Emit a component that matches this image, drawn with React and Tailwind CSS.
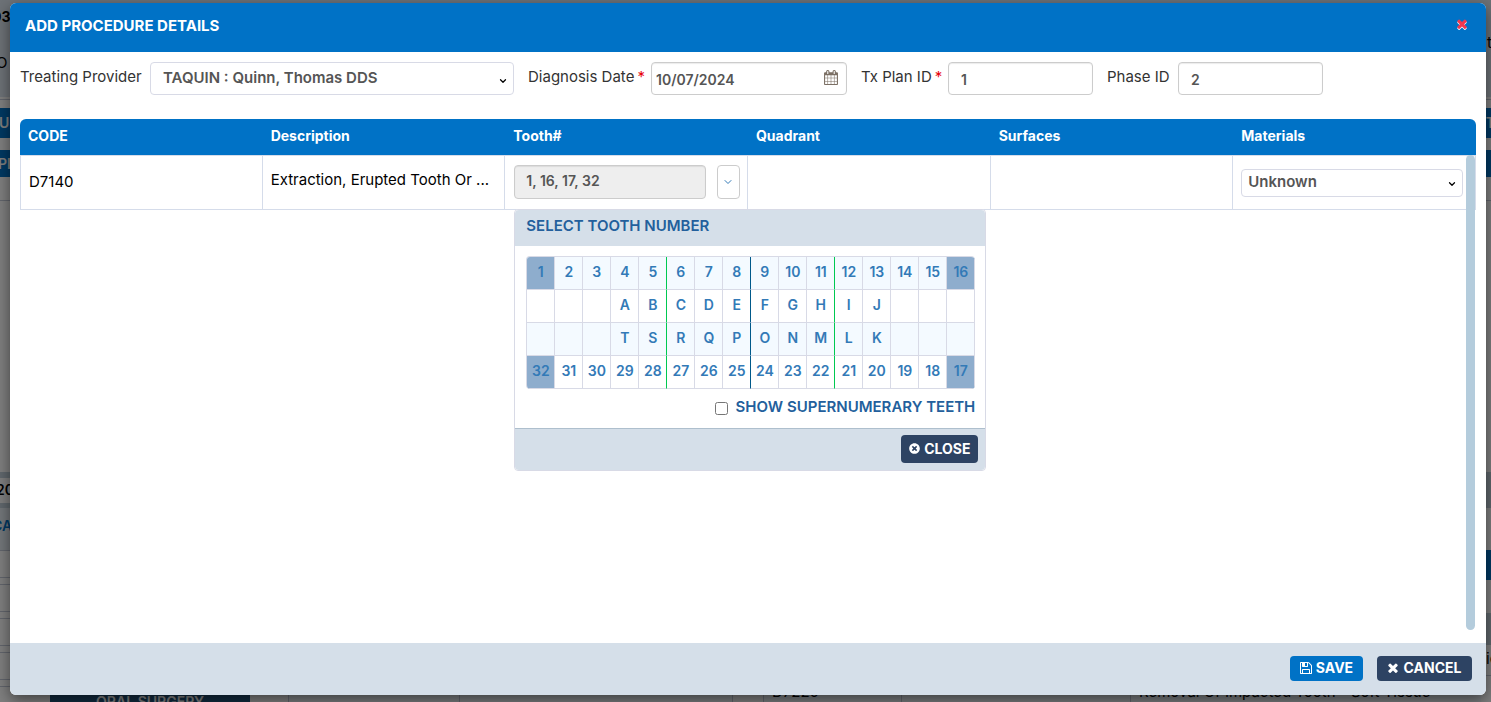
import React, { useState } from 'react';
import { FaTimesCircle } from 'react-icons/fa';
import { ChevronDown } from 'lucide-react';

const COLUMNS = ['CODE', 'Description', 'Tooth#', 'Quadrant', 'Surfaces', 'Materials'];

const TEETH = [
  ['1', '2', '3', '4', '5', '6', '7', '8', '9', '10', '11', '12', '13', '14', '15', '16'],
  ['', '', '', 'A', 'B', 'C', 'D', 'E', 'F', 'G', 'H', 'I', 'J', '', '', ''],
  ['', '', '', 'T', 'S', 'R', 'Q', 'P', 'O', 'N', 'M', 'L', 'K', '', '', ''],
  ['32', '31', '30', '29', '28', '27', '26', '25', '24', '23', '22', '21', '20', '19', '18', '17'],
];

// Sextant lines are green, the midline is blue
const DIVIDERS = {
  4: 'border-r border-b border-b-[#d8dae6] border-r-green-500',
  7: 'border-r border-b border-b-[#d8dae6] border-r-sky-800',
  10: 'border-r border-b border-b-[#d8dae6] border-r-green-500',
};

const TimesIcon = ({ className }) => (
  <svg viewBox="300 300 1192 1256" className={className} fill="currentColor" aria-hidden="true">
    <path d="M1490 1322q0 40-28 68l-136 136q-28 28-68 28t-68-28l-294-294-294 294q-28 28-68 28t-68-28l-136-136q-28-28-28-68t28-68l294-294-294-294q-28-28-28-68t28-68l136-136q28-28 68-28t68 28l294 294 294-294q28-28 68-28t68 28l136 136q28 28 28 68t-28 68l-294 294 294 294q28 28 28 68z" />
  </svg>
);

const FloppyIcon = ({ className }) => (
  <svg viewBox="128 128 1536 1536" className={className} fill="currentColor" aria-hidden="true">
    <path d="M512 1536h768v-384h-768v384zm896 0h128v-896q0-14-10-38.5t-20-34.5l-281-281q-10-10-34-20t-39-10v416q0 40-28 68t-68 28h-576q-40 0-68-28t-28-68v-416h-128v1280h128v-416q0-40 28-68t68-28h832q40 0 68 28t28 68v416zm-384-928v-320q0-13-9.5-22.5t-22.5-9.5h-192q-13 0-22.5 9.5t-9.5 22.5v320q0 13 9.5 22.5t22.5 9.5h192q13 0 22.5-9.5t9.5-22.5zm640 32v928q0 40-28 68t-68 28h-1344q-40 0-68-28t-28-68v-1344q0-40 28-68t68-28h928q40 0 88 20t76 48l280 280q28 28 48 76t20 88z" />
  </svg>
);

const CalendarIcon = ({ className }) => (
  <svg viewBox="64 0 1664 1792" className={className} fill="currentColor" aria-hidden="true">
    <path d="M192 1664h288v-288h-288v288zm352 0h320v-288h-320v288zm-352-352h288v-320h-288v320zm352 0h320v-320h-320v320zm-352-384h288v-288h-288v288zm736 736h320v-288h-320v288zm-384-736h320v-288h-320v288zm768 736h288v-288h-288v288zm-384-352h320v-320h-320v320zm-352-864v-288q0-13-9.5-22.5t-22.5-9.5h-64q-13 0-22.5 9.5t-9.5 22.5v288q0 13 9.5 22.5t22.5 9.5h64q13 0 22.5-9.5t9.5-22.5zm736 864h288v-320h-288v320zm-384-384h320v-288h-320v288zm384 0h288v-288h-288v288zm32-480v-288q0-13-9.5-22.5t-22.5-9.5h-64q-13 0-22.5 9.5t-9.5 22.5v288q0 13 9.5 22.5t22.5 9.5h64q13 0 22.5-9.5t9.5-22.5zm384-64v1280q0 52-38 90t-90 38h-1408q-52 0-90-38t-38-90v-1280q0-52 38-90t90-38h128v-96q0-66 47-113t113-47h64q66 0 113 47t47 113v96h384v-96q0-66 47-113t113-47h64q66 0 113 47t47 113v96h128q52 0 90 38t38 90z" />
  </svg>
);

const SelectBox = ({ id, label, value, className, arrowClass }) => (
  <div className="relative">
    <select
      id={id}
      aria-label={label}
      defaultValue={value}
      className={`w-full appearance-none rounded border border-[#d8dae6] bg-white font-semibold text-[#555] outline-none ${className}`}
    >
      <option>{value}</option>
    </select>
    <ChevronDown className={`pointer-events-none absolute h-2.5 w-2.5 text-black ${arrowClass}`} strokeWidth={3} />
  </div>
);

const Required = () => <span className="ml-[3px] text-red-600">*</span>;

// Chart page that stays visible around the dialog
const ChartPage = () => (
  <div className="absolute inset-0 flex flex-col overflow-hidden bg-white" aria-hidden="true">
    <div className="flex h-[97px] shrink-0 flex-col gap-7 bg-[#dbe5ee] pt-[7px]">
      <div className="-ml-2 text-sm leading-5 font-bold">03</div>
      <div className="flex justify-between text-[15px] leading-4">
        <span className="-ml-1">O</span>
        <span className="-mt-5 -mr-px">t</span>
      </div>
    </div>
    <div className="mt-0.5 h-[9px] shrink-0 border-t border-[#c5cad8]" />
    <div className="flex h-[30px] shrink-0 items-center justify-between bg-[#0072c6] text-sm font-semibold text-white">
      <span className="-ml-px">U</span>
      <span className="-mr-1">T</span>
    </div>
    <div className="mt-3 flex h-[27px] shrink-0 items-center bg-[#0072c6] text-sm font-semibold text-white">
      <span className="-ml-0.5">PL</span>
    </div>
    <div className="mt-[23px] h-[272px] shrink-0 border-t border-[#c5cad8]" />
    <div className="flex h-9 shrink-0 items-center bg-[#c3d0da]">
      <div className="flex h-[25px] w-10 items-center bg-white text-sm font-semibold">
        <span className="-ml-1">20</span>
      </div>
    </div>
    <div className="flex min-h-0 grow justify-between">
      <div className="w-8 shrink-0">
        <div className="h-[42px] bg-[#e6eef5] pt-2 text-sm font-semibold text-[#0072c6]">
          <div className="-ml-2">CA</div>
        </div>
        <div className="flex flex-col gap-1.5">
          {[0, 1, 2, 3, 4].map(i => (
            <div key={i} className="h-7 border-y border-[#c5cad8]" />
          ))}
        </div>
      </div>
      <div className="flex min-w-0 grow items-end">
        <div className="flex h-2 min-w-0 grow">
          <div className="ml-[18px] w-[200px] shrink-0 bg-[#23547c] text-center text-sm leading-4 font-semibold text-white">
            ORAL SURGERY
          </div>
          <div className="ml-[38px] h-full w-[172px] shrink-0 border-x border-[#c5cad8] bg-[#f4faff]" />
          <div className="h-full grow border-r border-[#c5cad8] bg-[#f4faff]" />
          <div className="h-full w-[31px] shrink-0 border-r border-[#c5cad8]" />
          <div className="h-full w-[138px] shrink-0 border-r border-[#c5cad8] bg-[#f4faff] pl-2 text-[15px] leading-3">
            <div className="-mt-2">D7220</div>
          </div>
          <div className="h-full w-[229px] shrink-0 border-r border-[#c5cad8] bg-[#f4faff]" />
          <div className="h-full w-[350px] shrink-0 bg-[#f4faff] pl-2 text-[15px] leading-3 whitespace-nowrap">
            <div className="-mt-2">Removal Of Impacted Tooth - Soft Tissue</div>
          </div>
        </div>
      </div>
      <div className="w-2.5 shrink-0 pt-[42px]">
        <div className="h-[30px] bg-[#0072c6]" />
        <div className="mt-[33px] h-8 bg-[#c3d0da]" />
        <div className="h-[31px] border-b border-[#c5cad8] pt-1 pl-[5px] text-[15px] leading-5">ic</div>
      </div>
    </div>
    <div className="absolute inset-0 bg-black/50" />
  </div>
);

const ToothPicker = ({ selected, onToggle, onClose }) => (
  <div className="absolute top-full left-[9px] z-10 w-[472px] rounded border border-[#d8dae6] bg-white">
    <div className="rounded-t bg-[#d5dfe9] px-[11px] pt-1.5 pb-2.5 text-[15px] leading-5 font-semibold text-[#235f9c]">
      SELECT TOOTH NUMBER
    </div>
    <div className="pt-2.5 pr-2.5 pl-[11px]">
      <div className="overflow-hidden rounded border-t border-l border-[#d8dae6]">
        <table className="w-full table-fixed border-separate border-spacing-0">
          <tbody>
            {TEETH.map((row, r) => (
              <tr key={r} className="odd:bg-[#f4faff]">
                {row.map((tooth, c) => (
                  <td
                    key={c}
                    className={`h-[33px] p-0 ${DIVIDERS[c] || 'border-r border-b border-[#d8dae6]'} ${selected.includes(tooth) ? 'bg-[#8eadcd]' : ''}`}
                  >
                    {tooth && (
                      <button
                        type="button"
                        onClick={() => onToggle(tooth)}
                        className="block h-8 w-full pb-0.5 text-center text-[14px] leading-5 font-semibold text-[#337ab7]"
                      >
                        {tooth}
                      </button>
                    )}
                  </td>
                ))}
              </tr>
            ))}
          </tbody>
        </table>
      </div>
      <div className="flex h-[39px] items-start justify-end gap-2 pt-2 text-[#235f9c]">
        <input id="supernumerary" type="checkbox" className="mt-[5px] h-[13px] w-[13px]" />
        <label htmlFor="supernumerary" className="text-[15px] leading-5 font-semibold">
          SHOW SUPERNUMERARY TEETH
        </label>
      </div>
    </div>
    <div className="flex h-[42px] justify-end rounded-b border-t border-[#aebfcd] bg-[#d5dfe9] px-[7px] pt-1.5">
      <button
        type="button"
        onClick={onClose}
        className="flex h-7 w-[77px] items-center justify-center gap-1 rounded bg-[#2d4363] pb-0.5 text-[14px] font-bold text-white"
      >
        <FaTimesCircle className="h-[11px] w-[11px]" />
        CLOSE
      </button>
    </div>
  </div>
);

const App = () => {
  const [selected, setSelected] = useState(['1', '16', '17', '32']);
  const [pickerOpen, setPickerOpen] = useState(true);

  const toggleTooth = tooth => {
    setSelected(prev =>
      prev.includes(tooth) ? prev.filter(t => t !== tooth) : [...prev, tooth].sort((a, b) => Number(a) - Number(b))
    );
  };

  const inputClass =
    'h-[33px] rounded border border-[#ccc] bg-white pt-0.5 text-[14px] font-semibold text-[#555] shadow-[inset_0_1px_1px_rgba(0,0,0,0.08)] outline-none';
  const labelClass = 'shrink-0 pt-[5px] text-[15px] leading-5 whitespace-nowrap text-[#333]';

  return (
    <div className="relative h-screen overflow-hidden font-['Inter','Liberation_Sans',sans-serif]">
      <ChartPage />

      <div className="relative flex h-full flex-col pt-[3px] pr-[5px] pb-[7px] pl-2.5">
        <div role="dialog" aria-labelledby="dialog-title" className="flex grow flex-col rounded-md bg-white shadow-[0_5px_15px_rgba(0,0,0,0.5)]">
          {/* Header */}
          <div className="flex h-[49px] items-start justify-between rounded-t-md bg-[#0072c6] px-[15px] pt-[13px] text-white">
            <h1 id="dialog-title" className="text-[15px] leading-5 font-bold">ADD PROCEDURE DETAILS</h1>
            <button type="button" aria-label="Close" className="mt-[3px] mr-1 text-[#f0384f]">
              <TimesIcon className="h-2.5 w-2.5 drop-shadow-[0_1px_0_#fff]" />
            </button>
          </div>

          {/* Body */}
          <div className="flex grow flex-col px-2.5 pt-2.5 pb-[13px]">
            <div className="flex gap-3.5">
              <div className="flex">
                <label htmlFor="provider" className={`w-[130px] ${labelClass}`}>Treating Provider</label>
                <div className="w-[364px]">
                  <SelectBox
                    id="provider"
                    value="TAQUIN : Quinn, Thomas DDS"
                    className="h-[33px] px-3 text-[15px]"
                    arrowClass="top-3.5 right-1.5"
                  />
                </div>
              </div>
              <div className="flex">
                <label htmlFor="diagnosis-date" className={`w-[123px] ${labelClass}`}>Diagnosis Date<Required /></label>
                <div className="relative w-[196px]">
                  <input id="diagnosis-date" defaultValue="10/07/2024" className={`w-full px-1 ${inputClass}`} />
                  <button type="button" aria-label="Pick a date" className="absolute top-2 right-[9px] text-[#7b6f64]">
                    <CalendarIcon className="h-[15px] w-3.5" />
                  </button>
                </div>
              </div>
              <div className="flex">
                <label htmlFor="plan-id" className={`w-[87px] ${labelClass}`}>Tx Plan ID<Required /></label>
                <input id="plan-id" defaultValue="1" className={`w-[145px] px-3 ${inputClass}`} />
              </div>
              <div className="flex">
                <label htmlFor="phase-id" className={`w-[71px] ${labelClass}`}>Phase ID</label>
                <input id="phase-id" defaultValue="2" className={`w-[145px] px-3 ${inputClass}`} />
              </div>
            </div>

            <div className="relative mt-6 grow">
              <table className="w-full table-fixed border-separate border-spacing-0">
                <thead>
                  <tr>
                    {COLUMNS.map(name => (
                      <th
                        key={name}
                        className="h-9 bg-[#0072c6] px-2 pb-0.5 text-left text-[14px] leading-5 font-bold text-white first:rounded-tl-md last:rounded-tr-md"
                      >
                        {name}
                      </th>
                    ))}
                  </tr>
                </thead>
                <tbody className="[&>tr>.cell]:border-y [&>tr>.cell]:border-r [&>tr>.cell]:border-[#d5dcea]">
                  <tr className="h-[55px]">
                    <td className="cell border-l px-2 pb-0.5 text-[15px] leading-5">D7140</td>
                    <td className="cell truncate px-2 pb-1.5 text-[15px] leading-5">Extraction, Erupted Tooth Or ...</td>
                    <td className="cell relative pr-[7px] pb-0.5 pl-[9px]">
                      <div className="flex justify-between">
                        <input
                          aria-label="Tooth numbers"
                          readOnly
                          value={selected.join(', ')}
                          className="h-[34px] w-48 rounded border border-[#ccc] bg-[#eee] px-[11px] pb-0.5 text-[14px] font-semibold text-[#555] shadow-[inset_0_1px_1px_rgba(0,0,0,0.08)] outline-none"
                        />
                        <button
                          type="button"
                          aria-label="Select teeth"
                          onClick={() => setPickerOpen(!pickerOpen)}
                          className="flex h-[34px] w-[23px] items-center justify-center rounded border border-[#ccc] text-[#337ab7]"
                        >
                          <ChevronDown className="h-3 w-3" strokeWidth={2} />
                        </button>
                      </div>
                      {pickerOpen && (
                        <ToothPicker selected={selected} onToggle={toggleTooth} onClose={() => setPickerOpen(false)} />
                      )}
                    </td>
                    <td className="cell" />
                    <td className="cell" />
                    <td className="cell pr-3 pl-2">
                      <SelectBox
                        label="Materials"
                        value="Unknown"
                        className="h-7 px-1.5 text-[15px]"
                        arrowClass="top-2.5 right-1.5"
                      />
                    </td>
                  </tr>
                </tbody>
              </table>
              {/* Scroll thumb */}
              <div className="absolute top-9 right-px bottom-0 w-[9px] rounded-full bg-[#b4ccdc]" />
            </div>
          </div>

          {/* Footer */}
          <div className="flex h-[52px] items-start justify-end gap-3.5 rounded-b-md bg-[#d5dfe9] px-3.5 pt-[13px] text-[14px] font-bold text-white">
            <button type="button" className="flex h-[25px] w-[73px] items-center justify-center gap-1 rounded bg-[#0072c6] pb-0.5">
              <FloppyIcon className="h-3 w-3" />
              SAVE
            </button>
            <button type="button" className="flex h-[25px] w-[95px] items-center justify-center gap-1.5 rounded bg-[#2d4363] pb-0.5">
              <TimesIcon className="h-2.5 w-2.5" />
              CANCEL
            </button>
          </div>
        </div>
      </div>
    </div>
  );
};

export default App;
